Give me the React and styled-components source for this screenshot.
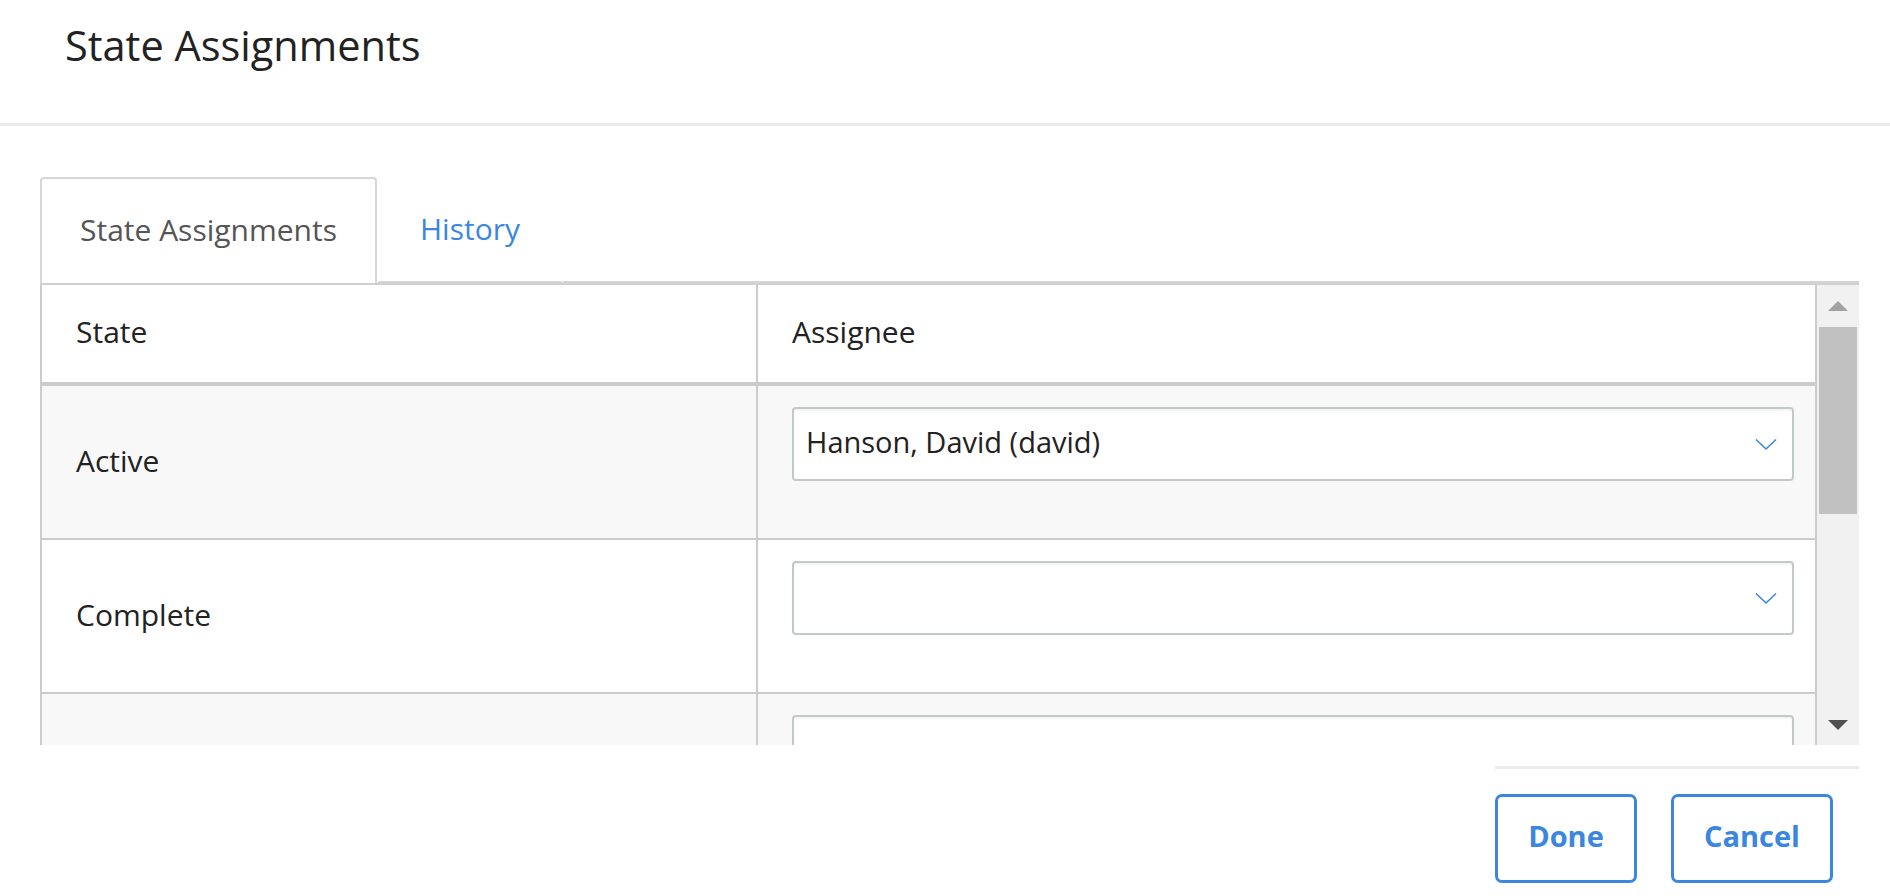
import React from 'react'
import styled, { createGlobalStyle } from 'styled-components'

const BLUE = '#3b87e0'
const LINE = '#cccccc'
const TEXT = '#222222'

const GlobalStyle = createGlobalStyle`
  html, body {
    margin: 0;
    padding: 0;
    background: #ffffff;
    font-family: "Open Sans", "Noto Sans", sans-serif;
    color: ${ TEXT };
  }
`

const Page = styled.div`
  width: 1890px;
  height: 896px;
  overflow: hidden;
`

const Header = styled.header`
  box-sizing: border-box;
  height: 126px;
  padding: 20px 65px 0;
  border-bottom: 3px solid #e9ebec;
`

const Title = styled.h1`
  margin: 0;
  font-size: 41.5px;
  font-weight: 400;
  line-height: 50px;
  color: ${ TEXT };
`

const Content = styled.main`
  padding: 51px 31px 0 40px;
`

const Tabs = styled.div`
  display: flex;
  height: 106px;
`

const Tab = styled.div`
  box-sizing: border-box;
  display: flex;
  align-items: center;
  padding: 0 ${ p => p.active ? '38px' : '41px' } 4px;
  font-size: 30px;
  color: ${ p => p.active ? '#555555' : BLUE };
  border: 2px solid ${ p => p.active ? '#d6d6d6' : 'transparent' };
  border-bottom: ${ p => p.active ? 'none' : '2px solid #d4d4d4' };
  border-radius: 4px 4px 0 0;
  background: #ffffff;
`

const TabFiller = styled.div`
  flex: 1;
  border-bottom: 2px solid #d4d4d4;
`

const Frame = styled.div`
  display: flex;
  height: 460px;
  border-top: 2px solid #d0d0d0;
`

const TableBody = styled.div`
  flex: 1;
  overflow: hidden;
  border-left: 2px solid ${ LINE };
  border-right: 2px solid ${ LINE };
`

const Row = styled.div`
  display: grid;
  grid-template-columns: 714px 1fr;
  background: ${ p => p.shaded ? '#f8f8f8' : '#ffffff' };
  border-bottom: ${ p => p.head ? '4px' : '2px' } solid ${ LINE };
`

const Cell = styled.div`
  display: flex;
  align-items: center;
  box-sizing: border-box;
  min-height: ${ p => p.head ? '97px' : '152px' };
  padding: 0 34px 4px;
  font-size: 30px;
  color: ${ TEXT };
  & + & {
    border-left: 2px solid ${ LINE };
  }
`

const SelectCell = styled.div`
  box-sizing: border-box;
  padding: 21px 21px 57px 34px;
  border-left: 2px solid ${ LINE };
`

const Select = styled.div`
  box-sizing: border-box;
  height: 74px;
  display: flex;
  align-items: center;
  justify-content: space-between;
  padding: 0 15px 0 12px;
  background: #ffffff;
  border: 2px solid #c3c9c9;
  border-radius: 4px;
  box-shadow: inset 0 2px 2px rgba(0, 0, 0, 0.05);
  font-size: 29px;
  color: ${ TEXT };
`

const SelectValue = styled.span`
  padding-bottom: 5px;
`

const Scrollbar = styled.div`
  width: 42px;
  display: flex;
  flex-direction: column;
  background: #f1f1f1;
`

const ScrollButton = styled.div`
  height: 41px;
  display: flex;
  align-items: center;
  justify-content: center;
`

const Track = styled.div`
  flex: 1;
  padding: 1px 2px 0;
`

const Thumb = styled.div`
  height: 187px;
  background: #c1c1c1;
`

const Footer = styled.footer`
  box-sizing: border-box;
  width: 364px;
  margin: 21px 0 0 auto;
  padding: 25px 26px 0 0;
  border-top: 3px solid #e8eaeb;
  display: flex;
  gap: 34px;
`

const Button = styled.button`
  box-sizing: border-box;
  width: ${ p => p.wide ? '162px' : '142px' };
  height: 89px;
  border: 3px solid ${ BLUE };
  border-radius: 7px;
  background: #ffffff;
  color: ${ BLUE };
  font-family: "Open Sans", "Noto Sans", sans-serif;
  font-size: 29px;
  font-weight: 700;
  padding: 0 0 6px;
`

const Chevron = () => (
  <svg width="22" height="13" viewBox="0 0 22 13">
    <polyline points="1,1.5 11,11 21,1.5" fill="none" stroke={ BLUE } strokeWidth="1.6" />
  </svg>
)

const Arrow = ({ up, color }) => (
  <svg width="20" height="10" viewBox="0 0 20 10">
    <polygon points={ up ? '0,10 10,0 20,10' : '0,0 20,0 10,10' } fill={ color } />
  </svg>
)

const rows = [
  { state: 'Active', assignee: 'Hanson, David (david)' },
  { state: 'Complete', assignee: '' },
  { state: '', assignee: '' },
]

const App = () => {
  return (
    <Page>
      <GlobalStyle />
      <Header>
        <Title>State Assignments</Title>
      </Header>
      <Content>
        <Tabs>
          <Tab active>State Assignments</Tab>
          <Tab>History</Tab>
          <TabFiller />
        </Tabs>
        <Frame>
          <TableBody>
            <Row head>
              <Cell head>State</Cell>
              <Cell head>Assignee</Cell>
            </Row>
            { rows.map((row, i) => (
              <Row key={ i } shaded={ i % 2 === 0 }>
                <Cell>{ row.state }</Cell>
                <SelectCell>
                  <Select>
                    <SelectValue>{ row.assignee }</SelectValue>
                    <Chevron />
                  </Select>
                </SelectCell>
              </Row>
            )) }
          </TableBody>
          <Scrollbar>
            <ScrollButton>
              <Arrow up color="#a3a3a3" />
            </ScrollButton>
            <Track>
              <Thumb />
            </Track>
            <ScrollButton>
              <Arrow color="#505050" />
            </ScrollButton>
          </Scrollbar>
        </Frame>
        <Footer>
          <Button>Done</Button>
          <Button wide>Cancel</Button>
        </Footer>
      </Content>
    </Page>
  )
}

export default App
